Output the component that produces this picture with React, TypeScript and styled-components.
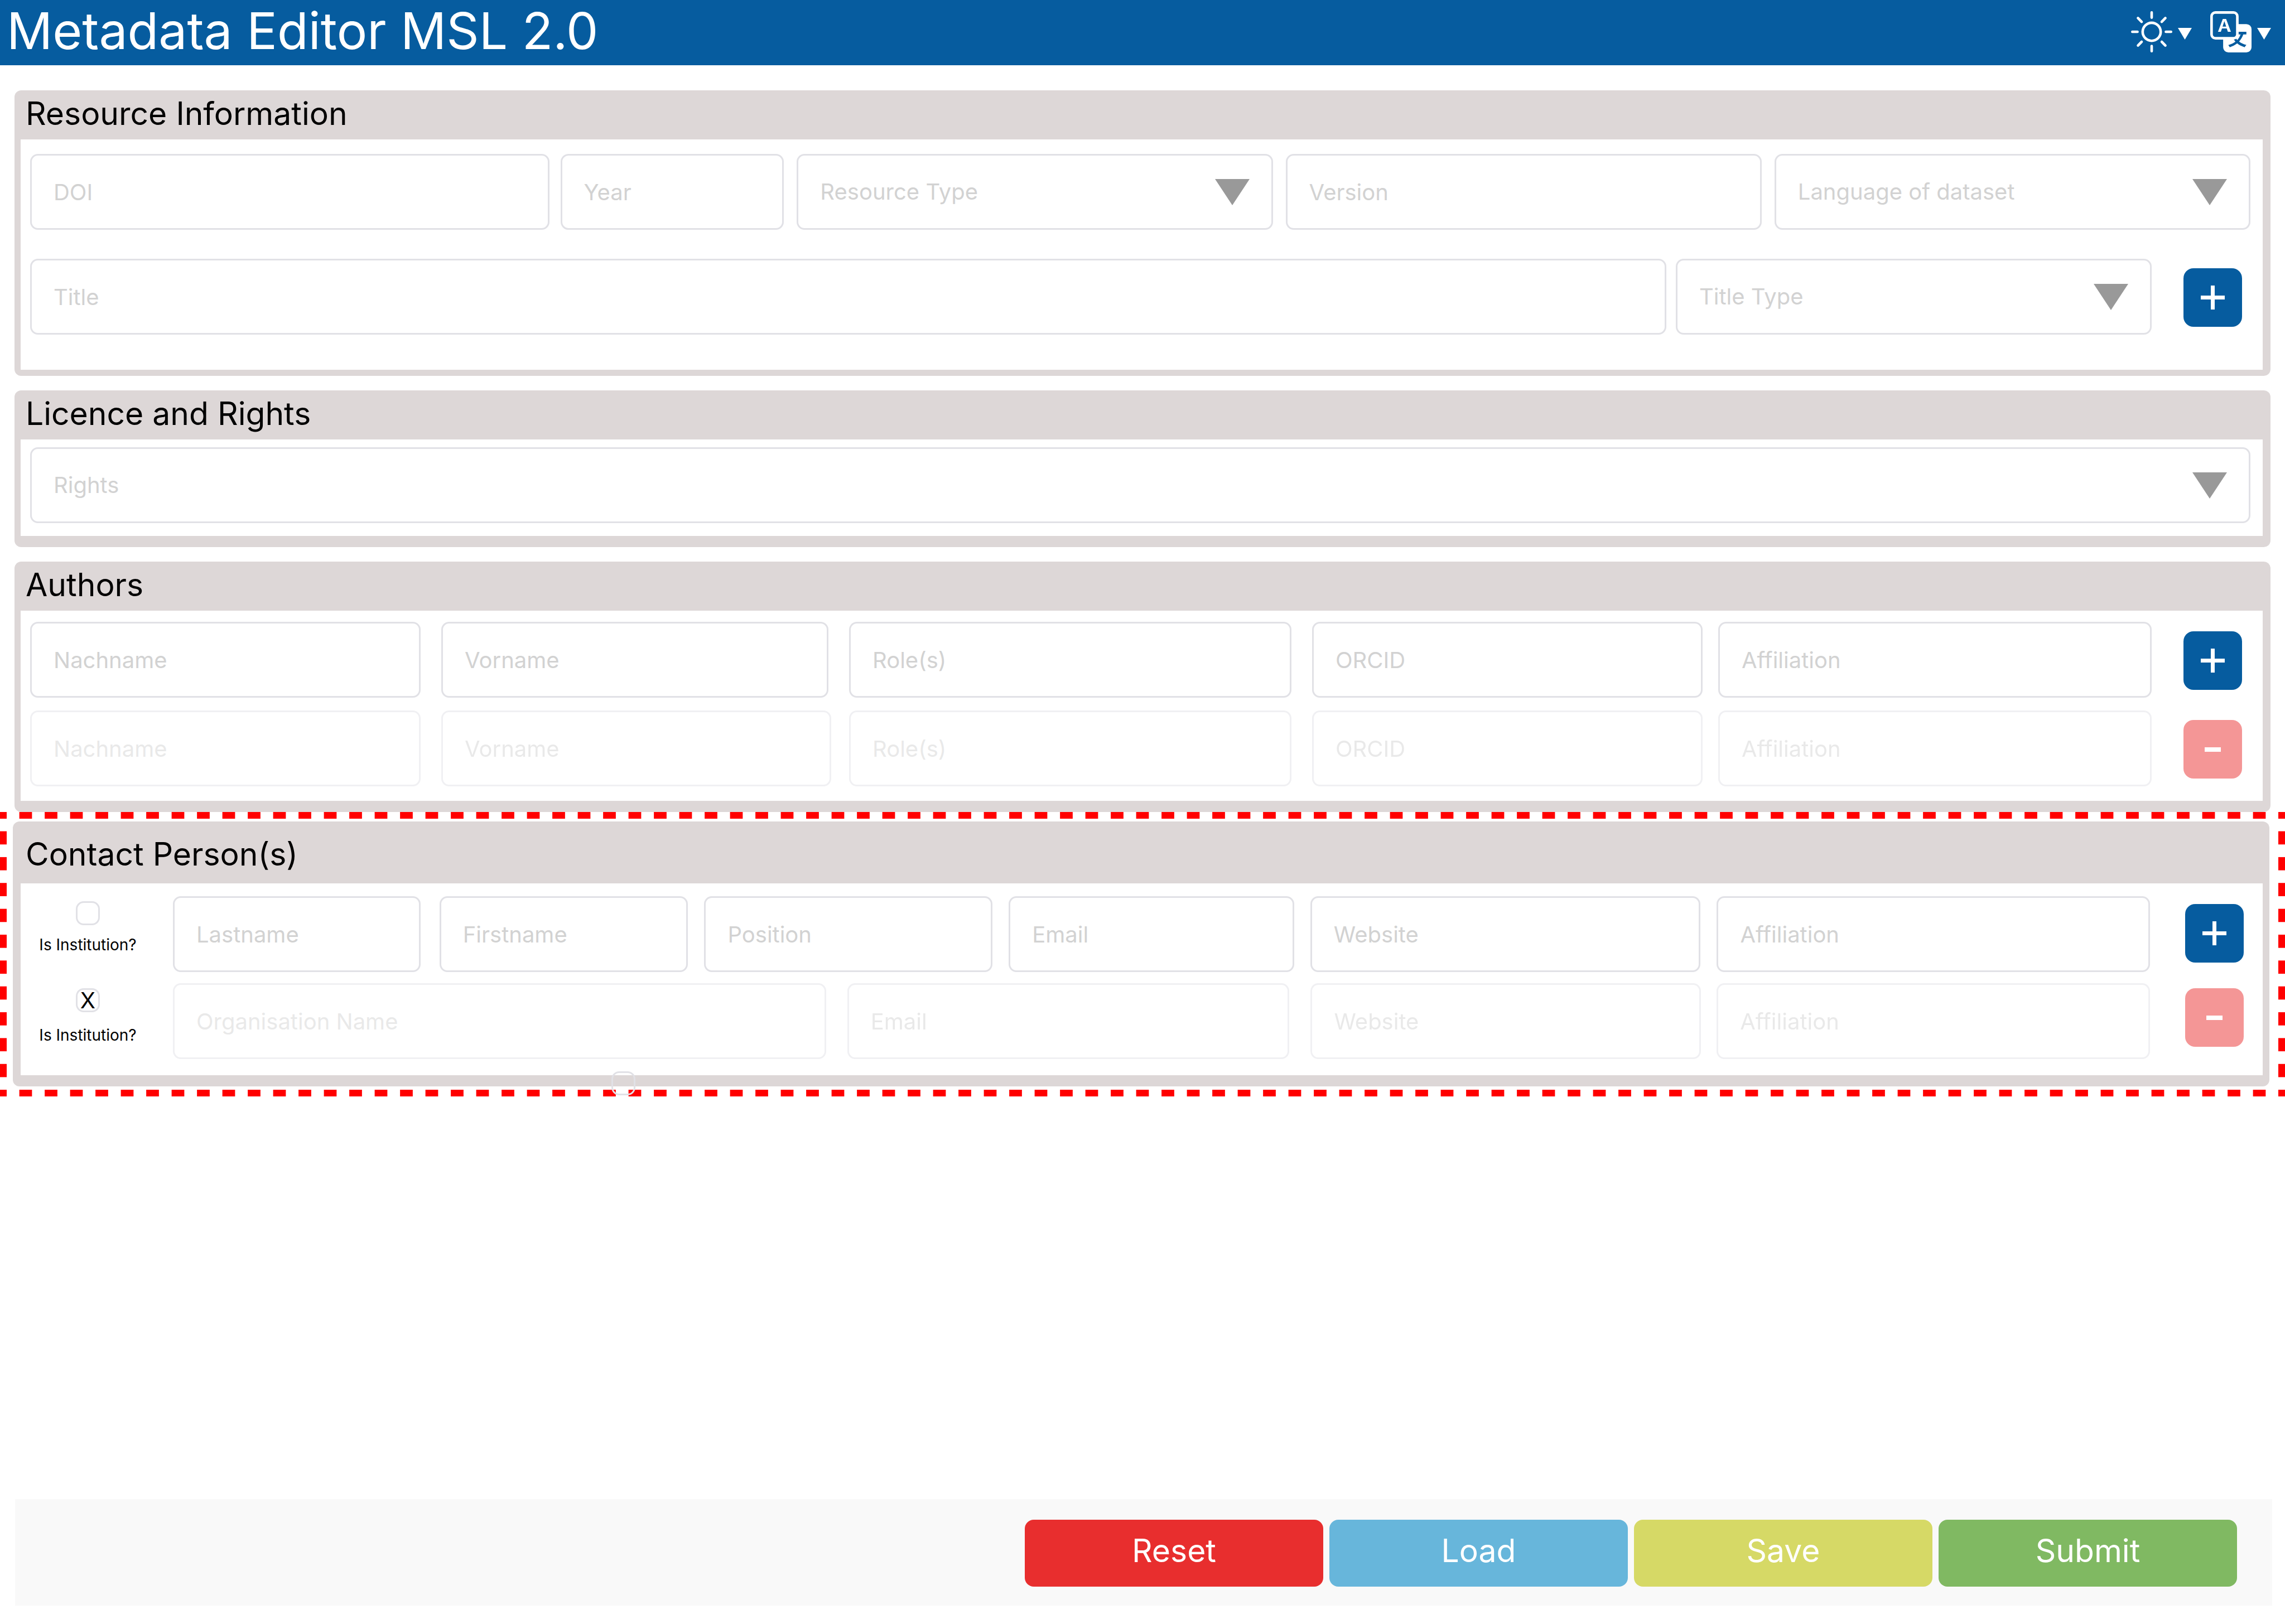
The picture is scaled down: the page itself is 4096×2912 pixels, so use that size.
import React from "react";
import styled, { createGlobalStyle } from "styled-components";

const GlobalStyle = createGlobalStyle`
  *, *::before, *::after { box-sizing: border-box; }
  body { margin: 0; background: #fff; }
  #root { font-family: Inter, "Noto Sans", sans-serif; color: #000; }
  button, input, select { font-family: inherit; margin: 0; }
`;

const Page = styled.div`
  min-height: 100vh;
  display: flex;
  flex-direction: column;
  padding-bottom: 33px;
`;

const Header = styled.header`
  display: flex;
  align-items: flex-start;
  justify-content: space-between;
  height: 117px;
  padding: 0 25px 0 12px;
  background: #065c9f;
  color: #fff;
`;

const AppTitle = styled.h1`
  margin: 0;
  font-size: 91px;
  line-height: 111px;
  font-weight: 400;
`;

const Tools = styled.nav`
  display: flex;
  gap: 33px;
  padding-top: 20px;
`;

const ToolButton = styled.button`
  display: flex;
  align-items: center;
  gap: 10px;
  padding: 0;
  border: 0;
  background: none;
  color: inherit;
`;

const ToolArrow = styled.svg`
  width: 25px;
  height: 21px;
  margin-top: 6px;
`;

const Main = styled.main`
  flex: 1;
  padding-top: 45px;
`;

const Section = styled.section<{ $edge: number; $space: number }>`
  margin: 0 26px ${(p) => p.$space}px;
  padding: 0 14px ${(p) => p.$edge}px 11px;
  border-radius: 12px;
  background: #ddd7d7;
`;

const NestedSection = styled(Section)`
  margin: 0;
  padding: 0 12px ${(p) => p.$edge}px 14px;
`;

const SectionTitle = styled.h2<{ $tall?: boolean }>`
  margin: 0;
  padding: ${(p) => (p.$tall ? "24px 9px 18px" : "7px 9px 12px")};
  font-size: 57px;
  line-height: 69px;
  font-weight: 400;
`;

const Body = styled.div<{ $top: number; $gap?: number; $bottom: number }>`
  display: flex;
  flex-direction: column;
  gap: ${(p) => p.$gap ?? 0}px;
  padding: ${(p) => p.$top}px 22px ${(p) => p.$bottom}px 17px;
  background: #fff;
`;

const Row = styled.div`
  display: flex;
  align-items: flex-start;
`;

const Group = styled.div<{ $cols: number[]; $gap: number; $faded?: boolean }>`
  display: grid;
  flex: 1;
  min-width: 0;
  grid-template-columns: ${(p) => p.$cols.map((c) => `minmax(0, ${c}fr)`).join(" ")};
  column-gap: ${(p) => p.$gap}px;
  opacity: ${(p) => (p.$faded ? 0.5 : 1)};
`;

const TextField = styled.input`
  width: 100%;
  height: 136px;
  padding: 0 39px;
  border: 3px solid #e1e1e6;
  border-radius: 14px;
  background: #fff;
  color: #333;
  font-size: 40px;
  line-height: 48px;
  &::placeholder { color: #d2d2d2; opacity: 1; }
`;

const SelectWrap = styled.div`
  display: grid;
  align-items: center;
  justify-items: end;
  & > * { grid-area: 1 / 1; }
`;

const SelectBox = styled.select`
  appearance: none;
  width: 100%;
  height: 136px;
  padding: 0 39px;
  border: 3px solid #e1e1e6;
  border-radius: 14px;
  background: #fff;
  color: #d2d2d2;
  font-size: 40px;
  line-height: 48px;
`;

const Arrow = styled.svg`
  width: 62px;
  height: 47px;
  margin-right: 42px;
  pointer-events: none;
`;

const SquareButton = styled.button<{ $color: string; $top: number; $inner?: boolean }>`
  flex: none;
  display: flex;
  align-items: center;
  justify-content: center;
  width: 105px;
  height: 105px;
  margin: ${(p) => p.$top}px ${(p) => (p.$inner ? 12 : 15)}px 0 ${(p) => (p.$inner ? 63 : 57)}px;
  padding: 0;
  border: 0;
  border-radius: 18px;
  background: ${(p) => p.$color};
  color: #fff;
`;

const Highlight = styled.div`
  --edge: #f00 25%, transparent 25% 75%, #f00 75%;
  position: relative;
  padding: 17px 28px 18px 23px;
  background:
    linear-gradient(90deg, var(--edge)) 0 0 / calc(100% / 90) 12px repeat-x,
    linear-gradient(90deg, var(--edge)) 0 100% / calc(100% / 90) 12px repeat-x,
    linear-gradient(180deg, var(--edge)) 0 0 / 12px calc(100% / 11) repeat-y,
    linear-gradient(180deg, var(--edge)) 100% 0 / 12px calc(100% / 11) repeat-y;
`;

const CheckCell = styled.label<{ $gap: number }>`
  flex: none;
  display: flex;
  flex-direction: column;
  align-items: center;
  gap: ${(p) => p.$gap}px;
  width: 207px;
  margin-right: 49px;
  padding-top: 9px;
  font-size: 28px;
  line-height: 34px;
`;

const CheckBox = styled.input`
  appearance: none;
  display: grid;
  place-items: center;
  width: 43px;
  height: 43px;
  border: 3px solid #e1e1e6;
  border-radius: 14px;
  background: transparent;
  &:checked::before {
    content: "X";
    font-family: Inter, sans-serif;
    font-size: 40px;
    line-height: 37px;
    color: #000;
  }
`;

const StrayBox = styled(CheckBox)`
  position: absolute;
  left: 1096px;
  bottom: 2px;
`;

const Footer = styled.footer`
  display: flex;
  justify-content: flex-end;
  gap: 11px;
  margin: 0 23px 0 27px;
  padding: 37px 63px 34px;
  background: #f9f9f9;
`;

const ActionButton = styled.button<{ $color: string }>`
  width: 535px;
  height: 120px;
  padding: 0 0 9px;
  border: 0;
  border-radius: 16px;
  background: ${(p) => p.$color};
  color: #fff;
  font-size: 57px;
  line-height: 69px;
`;

const SunIcon = () => (
  <svg width="74" height="74" viewBox="0 0 16 16" fill="currentColor" aria-hidden="true">
    <path d="M8 11a3 3 0 1 1 0-6 3 3 0 0 1 0 6m0 1a4 4 0 1 0 0-8 4 4 0 0 0 0 8M8 0a.5.5 0 0 1 .5.5v2a.5.5 0 0 1-1 0v-2A.5.5 0 0 1 8 0m0 13a.5.5 0 0 1 .5.5v2a.5.5 0 0 1-1 0v-2A.5.5 0 0 1 8 13m8-5a.5.5 0 0 1-.5.5h-2a.5.5 0 0 1 0-1h2a.5.5 0 0 1 .5.5M3 8a.5.5 0 0 1-.5.5h-2a.5.5 0 0 1 0-1h2A.5.5 0 0 1 3 8m10.657-5.657a.5.5 0 0 1 0 .707l-1.414 1.415a.5.5 0 1 1-.707-.708l1.414-1.414a.5.5 0 0 1 .707 0m-9.193 9.193a.5.5 0 0 1 0 .707L3.05 13.657a.5.5 0 0 1-.707-.707l1.414-1.414a.5.5 0 0 1 .707 0m9.193 2.121a.5.5 0 0 1-.707 0l-1.414-1.414a.5.5 0 0 1 .707-.707l1.414 1.414a.5.5 0 0 1 0 .707M4.464 4.465a.5.5 0 0 1-.707 0L2.343 3.05a.5.5 0 1 1 .707-.707l1.414 1.414a.5.5 0 0 1 0 .708" />
  </svg>
);

const TranslateIcon = () => (
  <svg width="74" height="74" viewBox="0 0 16 16" fill="currentColor" aria-hidden="true">
    <path d="M4.545 6.714 4.11 8H3l1.862-5h1.284L8 8H6.833l-.435-1.286zm1.634-.736L5.5 3.956h-.049l-.679 2.022z" />
    <path d="M0 2a2 2 0 0 1 2-2h7a2 2 0 0 1 2 2v3h3a2 2 0 0 1 2 2v7a2 2 0 0 1-2 2H7a2 2 0 0 1-2-2v-3H2a2 2 0 0 1-2-2zm2-1a1 1 0 0 0-1 1v7a1 1 0 0 0 1 1h7a1 1 0 0 0 1-1V2a1 1 0 0 0-1-1zm7.138 9.995q.289.451.63.846c-.748.575-1.673 1.001-2.768 1.292.178.217.451.635.555.867 1.125-.359 2.08-.844 2.886-1.494.777.665 1.739 1.165 2.93 1.472.133-.254.414-.673.629-.89-1.125-.253-2.057-.694-2.82-1.284.681-.747 1.222-1.651 1.621-2.757H14V8h-3v1.047h.765c-.318.844-.74 1.546-1.272 2.13a6 6 0 0 1-.415-.492 2 2 0 0 1-.94.31" />
  </svg>
);

const SmallArrow = () => (
  <ToolArrow viewBox="0 0 25 21" fill="currentColor" aria-hidden="true">
    <path d="M0 0h25L12.500 21z" />
  </ToolArrow>
);

const PlusIcon = () => (
  <svg width="43" height="43" viewBox="0 0 43 43" fill="currentColor" aria-hidden="true">
    <path d="M18 0h7v18h18v7H25v18h-7V25H0v-7h18z" />
  </svg>
);

const MinusIcon = () => (
  <svg width="29" height="8" viewBox="0 0 29 8" fill="currentColor" aria-hidden="true">
    <path d="M0 0h29v8H0z" />
  </svg>
);

const Field = ({ name }: { name: string }) => (
  <TextField type="text" aria-label={name} placeholder={name} />
);

const Dropdown = ({ name }: { name: string }) => (
  <SelectWrap>
    <SelectBox aria-label={name} defaultValue="">
      <option value="">{name}</option>
    </SelectBox>
    <Arrow viewBox="0 0 62 47" aria-hidden="true">
      <path d="M0 0h62L31 47z" fill="#999" />
    </Arrow>
  </SelectWrap>
);

const AddButton = ({ top = 17, inner }: { top?: number; inner?: boolean }) => (
  <SquareButton type="button" aria-label="Add" $color="#065c9f" $top={top} $inner={inner}>
    <PlusIcon />
  </SquareButton>
);

const RemoveButton = ({ top = 17, inner }: { top?: number; inner?: boolean }) => (
  <SquareButton type="button" aria-label="Remove" $color="#f49696" $top={top} $inner={inner}>
    <MinusIcon />
  </SquareButton>
);

const AuthorFields = ({ faded }: { faded?: boolean }) => (
  <Group $cols={[700, 1524, 1505]} $gap={37} $faded={faded}>
    <Field name="Nachname" />
    <Group $cols={[faded ? 699 : 694, 793]} $gap={faded ? 32 : 37}>
      <Field name="Vorname" />
      <Field name="Role(s)" />
    </Group>
    <Group $cols={[700, 777]} $gap={28}>
      <Field name="ORCID" />
      <Field name="Affiliation" />
    </Group>
  </Group>
);

const InstitutionCheck = ({ checked, gap }: { checked?: boolean; gap: number }) => (
  <CheckCell $gap={gap}>
    <CheckBox type="checkbox" defaultChecked={checked} />
    Is Institution?
  </CheckCell>
);

export default function App() {
  return (
    <>
      <GlobalStyle />
      <Page>
        <Header>
          <AppTitle>Metadata Editor MSL 2.0</AppTitle>
          <Tools>
            <ToolButton type="button" aria-label="Theme">
              <SunIcon />
              <SmallArrow />
            </ToolButton>
            <ToolButton type="button" aria-label="Language">
              <TranslateIcon />
              <SmallArrow />
            </ToolButton>
          </Tools>
        </Header>
        <Main>
          <Section $edge={11} $space={26}>
            <SectionTitle>Resource Information</SectionTitle>
            <Body $top={26} $gap={52} $bottom={63}>
              <Group $cols={[1351, 853, 853, 853]} $gap={23}>
                <Group $cols={[931, 401]} $gap={20}>
                  <Field name="DOI" />
                  <Field name="Year" />
                </Group>
                <Dropdown name="Resource Type" />
                <Field name="Version" />
                <Dropdown name="Language of dataset" />
              </Group>
              <Row>
                <Group $cols={[2933, 853]} $gap={17}>
                  <Field name="Title" />
                  <Dropdown name="Title Type" />
                </Group>
                <AddButton />
              </Row>
            </Body>
          </Section>
          <Section $edge={20} $space={26}>
            <SectionTitle>Licence and Rights</SectionTitle>
            <Body $top={14} $bottom={23}>
              <Dropdown name="Rights" />
            </Body>
          </Section>
          <Section $edge={20} $space={0}>
            <SectionTitle>Authors</SectionTitle>
            <Body $top={20} $gap={23} $bottom={26}>
              <Row>
                <AuthorFields />
                <AddButton />
              </Row>
              <Row>
                <AuthorFields faded />
                <RemoveButton />
              </Row>
            </Body>
          </Section>
          <Highlight>
            <NestedSection $edge={20} $space={0}>
              <SectionTitle $tall>Contact Person(s)</SectionTitle>
              <Body $top={23} $gap={20} $bottom={29}>
                <Row>
                  <InstitutionCheck gap={18} />
                  <Group $cols={[924, 517, 512, 700, 777]} $gap={29}>
                    <Group $cols={[444, 446]} $gap={34}>
                      <Field name="Lastname" />
                      <Field name="Firstname" />
                    </Group>
                    <Field name="Position" />
                    <Field name="Email" />
                    <Field name="Website" />
                    <Field name="Affiliation" />
                  </Group>
                  <AddButton top={14} inner />
                </Row>
                <Row>
                  <InstitutionCheck checked gap={24} />
                  <Group $cols={[1171, 793, 1505]} $gap={38} $faded>
                    <Field name="Organisation Name" />
                    <Field name="Email" />
                    <Group $cols={[700, 777]} $gap={28}>
                      <Field name="Website" />
                      <Field name="Affiliation" />
                    </Group>
                  </Group>
                  <RemoveButton top={9} inner />
                </Row>
              </Body>
            </NestedSection>
            <StrayBox type="checkbox" aria-label="Institution" />
          </Highlight>
        </Main>
        <Footer>
          <ActionButton type="button" $color="#e82e2e">Reset</ActionButton>
          <ActionButton type="button" $color="#67b6db">Load</ActionButton>
          <ActionButton type="button" $color="#d6d966">Save</ActionButton>
          <ActionButton type="button" $color="#80b962">Submit</ActionButton>
        </Footer>
      </Page>
    </>
  );
}
